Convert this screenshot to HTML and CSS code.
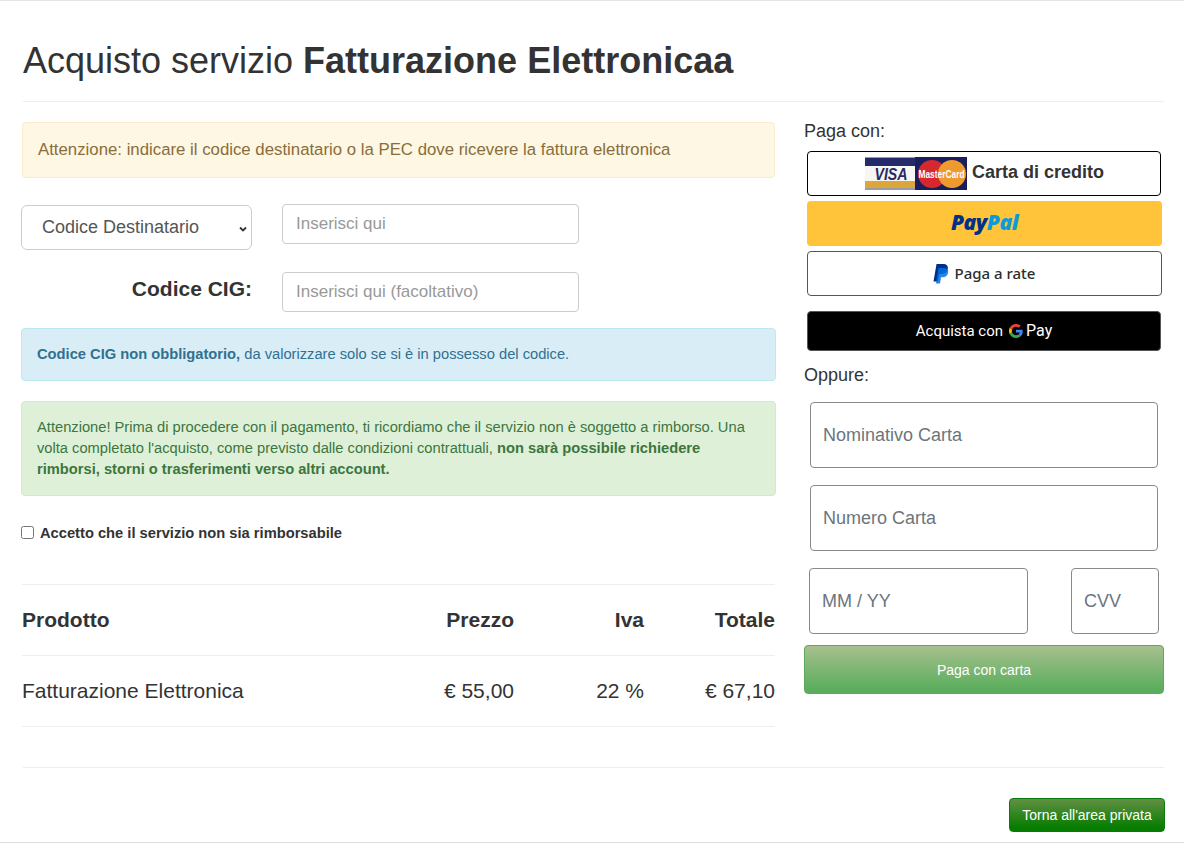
FILE: index.html
```html
<!DOCTYPE html>
<html lang="it">
<head>
<meta charset="utf-8">
<title>Acquisto servizio</title>
<link rel="stylesheet" href="styles.css">
</head>
<body>
<div class="page">
  <h1 class="title">Acquisto servizio <b>Fatturazione Elettronicaa</b></h1>
  <hr class="rule-top">
  <div class="columns">
    <div class="left">
      <div class="alert warning">Attenzione: indicare il codice destinatario o la PEC dove ricevere la fattura elettronica</div>
      <div class="form-row row-one">
        <div class="select-box">
          <select class="select"><option>Codice Destinatario</option></select>
        </div>
        <input class="field" type="text" placeholder="Inserisci qui">
      </div>
      <div class="form-row row-two">
        <label class="cig-label">Codice CIG:</label>
        <input class="field" type="text" placeholder="Inserisci qui (facoltativo)">
      </div>
      <div class="alert info"><b>Codice CIG non obbligatorio,</b> da valorizzare solo se si è in possesso del codice.</div>
      <div class="alert success">Attenzione! Prima di procedere con il pagamento, ti ricordiamo che il servizio non è soggetto a rimborso. Una volta completato l'acquisto, come previsto dalle condizioni contrattuali, <b>non sarà possibile richiedere rimborsi, storni o trasferimenti verso altri account.</b></div>
      <label class="accept"><input class="check" type="checkbox"><span>Accetto che il servizio non sia rimborsabile</span></label>
      <div class="table">
        <div class="t-row t-head">
          <div class="c-name">Prodotto</div><div class="c-price">Prezzo</div><div class="c-iva">Iva</div><div class="c-tot">Totale</div>
        </div>
        <div class="t-row">
          <div class="c-name">Fatturazione Elettronica</div><div class="c-price">€ 55,00</div><div class="c-iva">22 %</div><div class="c-tot">€ 67,10</div>
        </div>
      </div>
    </div>
    <div class="right">
      <div class="pay-label">Paga con:</div>
      <div class="pay-btn card-btn">
        <svg class="cards" width="102" height="33" viewBox="0 0 102 33">
          <rect width="102" height="33" fill="#1a1f5c"/>
          <rect x="0" y="0" width="50" height="33" fill="#f7f6f2"/>
          <rect x="0" y="0" width="50" height="1" fill="#9a9aa8"/>
          <rect x="0" y="1" width="50" height="8" fill="#252a6b"/>
          <rect x="0" y="24" width="50" height="7" fill="#dda63a"/>
          <rect x="0" y="31" width="50" height="2" fill="#9a9aa8"/>
          <text x="26" y="23" class="visa-text" text-anchor="middle" textLength="33" lengthAdjust="spacingAndGlyphs">VISA</text>
          <circle cx="67" cy="17" r="14" fill="#d8282f"/>
          <circle cx="87" cy="17" r="14" fill="#ee9a2e"/>
          <text x="53.500" y="20.500" class="mc-text" textLength="46" lengthAdjust="spacingAndGlyphs">MasterCard</text>
        </svg>
        <span class="card-text">Carta di credito</span>
      </div>
      <div class="pay-btn paypal-btn"><span class="pp-pay">Pay</span><span class="pp-pal">Pal</span></div>
      <div class="pay-btn rate-btn">
        <svg class="pp-icon" width="16" height="20" viewBox="0 0 16 20">
          <path d="M3.500 0H10c3.500 0 5.200 1.800 4.800 4.700-.5 3.600-2.900 5.400-6.200 5.400H6.200L5 17.500H.5z" fill="#003087"/>
          <path d="M5.500 4H11c3 0 4.600 1.600 4.200 4.200-.5 3.300-2.700 5-5.600 5H8L7 19.500H3z" fill="#0070e0" opacity=".85"/>
        </svg>
        <span class="rate-text">Paga a rate</span>
      </div>
      <div class="pay-btn gpay-btn">
        <span class="gpay-text">Acquista con</span>
        <svg class="g-icon" width="14" height="14" viewBox="0 0 48 48">
          <path fill="#EA4335" d="M24 9.500c3.500 0 6.700 1.200 9.200 3.600l6.900-6.900C35.900 2.400 30.500 0 24 0 14.600 0 6.500 5.400 2.600 13.200l8 6.200C12.500 13.700 17.800 9.500 24 9.500z"/>
          <path fill="#4285F4" d="M47 24.500c0-1.600-.1-3.100-.4-4.500H24v9h12.900c-.6 3-2.200 5.500-4.700 7.200l7.700 6c4.500-4.200 7.100-10.300 7.100-17.700z"/>
          <path fill="#FBBC05" d="M10.500 28.600c-.5-1.400-.8-3-.8-4.600s.3-3.200.8-4.600l-8-6.200C.9 16.500 0 20.100 0 24s.9 7.500 2.600 10.800z"/>
          <path fill="#34A853" d="M24 48c6.500 0 11.900-2.100 15.900-5.800l-7.700-6c-2.200 1.500-5 2.300-8.200 2.300-6.300 0-11.500-4.200-13.400-9.900l-8 6.200C6.500 42.600 14.600 48 24 48z"/>
        </svg>
        <span class="gpay-word">Pay</span>
      </div>
      <div class="or-label">Oppure:</div>
      <input class="card-field wide" type="text" placeholder="Nominativo Carta">
      <input class="card-field wide" type="text" placeholder="Numero Carta">
      <div class="card-split">
        <input class="card-field mm" type="text" placeholder="MM / YY">
        <input class="card-field cvv" type="text" placeholder="CVV">
      </div>
      <button class="pay-submit" type="button">Paga con carta</button>
    </div>
  </div>
  <hr class="rule-bottom">
  <div class="footer-bar"><button class="back-btn" type="button">Torna all'area privata</button></div>
</div>
</body>
</html>
```

FILE: styles.css
```css
* { box-sizing: border-box; }
html, body { margin: 0; padding: 0; background: #fff; }
body { font-family: "Liberation Sans", Arial, sans-serif; color: #333; font-size: 14px; }
.page { width: 1184px; height: 843px; border-top: 1px solid #e5e5e5; border-bottom: 1px solid #ddd; overflow: hidden; }
.title { margin: 40px 0 0 23px; font-size: 36px; line-height: 40px; font-weight: 400; color: #333; }
.title b { font-weight: 700; }
.rule-top { margin: 20px 20px 0 23px; border: 0; border-top: 1px solid #eee; height: 0; }
.columns { display: flex; align-items: flex-start; padding-left: 21px; margin-top: 20px; }
.left { width: 755px; }
.right { width: 360px; margin-left: 28px; }

.alert { border: 1px solid; border-radius: 4px; }
.warning { margin-left: 1px; width: 753px; height: 56px; padding: 17px 15px; font-size: 16.800px; line-height: 20px; border-color: #faebcc; color: #8a6d3b; background-color: #fdf7e3; }
.form-row { display: flex; }
.row-one { margin-top: 26px; height: 46px; }
.row-two { margin-top: 22px; }
.select-box { width: 231px; margin-right: 30px; padding-top: 1px; }
.select { display: block; width: 231px; height: 45px; padding: 0 16px 1px 20px; font-family: inherit; font-size: 18px; color: #555; appearance: none; background: #fff url("data:image/svg+xml,%3Csvg xmlns='http://www.w3.org/2000/svg' width='8' height='6' viewBox='0 0 8 6'%3E%3Cpath d='M1 1.500l3 3 3-3' fill='none' stroke='%23333' stroke-width='1.800'/%3E%3C/svg%3E") no-repeat 217px 20px; border: 1px solid #ccc; border-radius: 6px; }
.field { display: block; width: 297px; height: 40px; padding: 6px 13px; font-family: inherit; font-size: 17px; color: #555; background: #fff; border: 1px solid #ccc; border-radius: 4px; }
.field::placeholder { color: #999; opacity: 1; }
.cig-label { display: block; width: 231px; margin-right: 30px; text-align: right; font-size: 21px; font-weight: 700; line-height: 34px; color: #333; }
.info { margin-top: 16px; height: 53px; padding: 15px; font-size: 14.700px; line-height: 20px; background: #d9edf7; border-color: #bce8f1; color: #31708f; }
.success { margin-top: 20px; height: 95px; padding: 15px; font-size: 14.700px; line-height: 21px; background: #dff0d8; border-color: #d6e9c6; color: #3c763d; }
.accept { display: flex; align-items: center; margin-top: 29px; height: 16px; font-size: 14.700px; font-weight: 700; color: #333; }
.check { width: 13px; height: 13px; margin: -2px 6px 0 0; }

.table { margin-top: 43px; margin-left: 1px; width: 753px; border-top: 1px solid #eee; }
.t-row { display: flex; height: 71px; align-items: center; font-size: 21px; border-bottom: 1px solid #eee; color: #333; }
.t-head { font-weight: 700; }
.c-name { width: 360px; }
.c-price { width: 132px; text-align: right; }
.c-iva { width: 130px; text-align: right; }
.c-tot { width: 131px; text-align: right; }

.pay-label, .or-label { font-size: 18px; line-height: 20px; color: #333; }
.pay-label { margin-top: -1px; }
.pay-btn { display: flex; align-items: center; justify-content: center; margin-left: 3px; }
.card-btn { width: 354px; height: 45px; margin-top: 10px; border: 1px solid #000; border-radius: 4px; background: #fff; gap: 5px; }
.cards { display: block; margin-left: 1px; }
.visa-text { font-family: "Liberation Sans", Arial, sans-serif; font-size: 17px; font-weight: 700; font-style: italic; fill: #252a6b; }
.mc-text { font-family: "Liberation Sans", Arial, sans-serif; font-size: 10.500px; font-weight: 700; fill: #fff; }
.card-text { font-size: 18px; font-weight: 700; color: #333; margin-top: -2px; }
.paypal-btn { width: 355px; height: 45px; margin-top: 5px; padding-bottom: 4px; background: #ffc439; border-radius: 4px; font-family: "Open Sans", "Liberation Sans", sans-serif; font-size: 21px; font-weight: 800; font-style: italic; letter-spacing: -0.5px; }
.pp-pay { color: #003087; }
.pp-pal { color: #0a9bdc; }
.rate-btn { width: 355px; height: 45px; margin-top: 5px; border: 1px solid #555; border-radius: 4px; background: #fff; gap: 6px; }
.pp-icon { margin-left: -1px; }
.rate-text { font-family: "Noto Sans", "Open Sans", sans-serif; font-size: 15px; font-weight: 500; color: #2c2e2f; margin-top: -2px; }
.gpay-btn { width: 354px; height: 40px; margin-top: 15px; background: #000; border: 1px solid #555; border-radius: 4px; color: #fff; font-family: Roboto, "Open Sans", sans-serif; font-size: 15px; }
.g-icon { margin: 0 3px 1px 6px; }
.gpay-word { font-size: 16px; margin-top: -1px; }
.or-label { margin-top: 14px; }
.card-field { display: block; height: 66px; padding: 0 12px; font-family: inherit; font-size: 18px; color: #555; background: #fff; border: 1px solid #8a8a8a; border-radius: 4px; }
.card-field::placeholder { color: #6c757d; opacity: 1; }
.wide { width: 348px; margin-left: 6px; }
.or-label + .wide { margin-top: 17px; }
.wide + .wide { margin-top: 17px; }
.card-split { display: flex; margin-top: 17px; padding-left: 5px; }
.mm { width: 219px; }
.cvv { width: 88px; margin-left: 43px; }
.pay-submit { display: block; width: 360px; height: 49px; margin-top: 11px; font-family: inherit; font-size: 14px; color: #fff; border: 1px solid #5cab5c; border-radius: 4px; background: linear-gradient(#a7c08d, #5cae5e 90%); }

.rule-bottom { margin: 40px 20px 0 23px; border: 0; border-top: 1px solid #eee; height: 0; }
.footer-bar { display: flex; justify-content: flex-end; margin-top: 30px; padding-right: 19px; }
.back-btn { display: block; width: 156px; height: 34px; padding: 0; font-family: inherit; font-size: 14px; color: #fff; border: 1px solid #0a7a0a; border-radius: 4px; background: linear-gradient(#629043, #067d00 90%); }
```
